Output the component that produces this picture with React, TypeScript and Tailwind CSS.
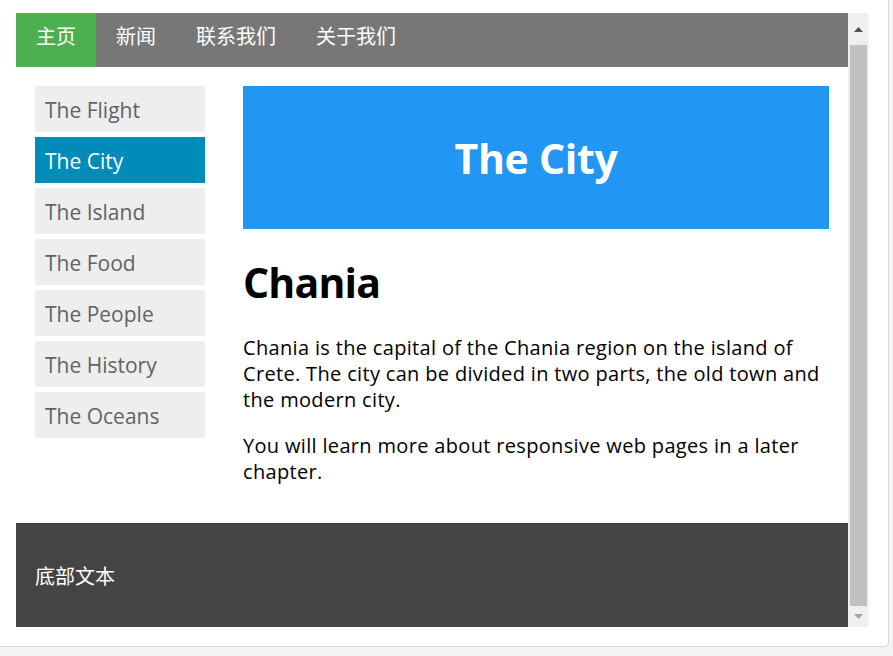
import React from "react";

const FONT = { fontFamily: '"Open Sans", "Noto Sans CJK SC", sans-serif' };

const navItems = ["主页", "新闻", "联系我们", "关于我们"];
const menu = ["The Flight", "The City", "The Island", "The Food", "The People", "The History", "The Oceans"];

function Scrollbar() {
  return (
    <div className="w-[21px] h-[614px] bg-[#f0f0f0] flex flex-col items-center shrink-0">
      <div className="h-[32px] w-full flex items-center justify-center">
        <svg width="9" height="5" viewBox="0 0 9 5">
          <polygon points="0,5 9,5 4.5,0" fill="#505050" />
        </svg>
      </div>
      <div className="w-[17px] h-[561px] bg-[#c1c1c1]" />
      <div className="flex-1 w-full flex items-center justify-center">
        <svg width="9" height="5" viewBox="0 0 9 5">
          <polygon points="0,0 9,0 4.5,5" fill="#a3a3a3" />
        </svg>
      </div>
    </div>
  );
}

export default function App() {
  return (
    <div className="w-[893px] h-[656px] bg-[#f3f3f3] overflow-hidden" style={FONT}>
      <div className="w-[889px] h-[647px] bg-white border-r border-b border-[#d9d9d9] rounded-br-[5px] pt-[13px] pl-[16px] flex">
        <div className="w-[832px] h-[614px] overflow-hidden flex flex-col shrink-0">
          {/* nav */}
          <div className="h-[54px] bg-[#777777] flex shrink-0">
            {navItems.map((t, i) => (
              <div
                key={t}
                className={`px-[20px] h-[54px] text-[20px] leading-[44px] pt-[2px] pb-[8px] text-white ${i === 0 ? "bg-[#4caf50]" : ""}`}
              >
                {t}
              </div>
            ))}
          </div>
          {/* body */}
          <div className="flex shrink-0">
            <div className="w-[208px] p-[19px] shrink-0">
              <ul className="flex flex-col gap-[5px]">
                {menu.map((m, i) => (
                  <li
                    key={m}
                    className={`h-[46px] px-[10px] pt-[2px] text-[21px] leading-[44px] ${
                      i === 1 ? "bg-[#008cba] text-white" : "bg-[#eeeeee] text-[#636363]"
                    }`}
                  >
                    {m}
                  </li>
                ))}
              </ul>
            </div>
            <div className="w-[624px] px-[19px] pt-[19px] pb-[19px] shrink-0">
              <div className="h-[143px] bg-[#2196f3] flex items-center justify-center">
                <h1 className="text-[41px] leading-[42px] tracking-[-0.3px] font-bold text-white">The City</h1>
              </div>
              <h1 className="mt-[28px] text-[41px] leading-[50px] tracking-[-0.8px] font-bold text-black">Chania</h1>
              <p className="mt-[28px] text-[20px] leading-[26px] tracking-[0.33px] text-black whitespace-nowrap">
                Chania is the capital of the Chania region on the island of
                <br />
                Crete. The city can be divided in two parts, the old town and
                <br />
                the modern city.
              </p>
              <p className="mt-[20px] mb-[19px] text-[20px] leading-[26px] tracking-[0.33px] text-black whitespace-nowrap">
                You will learn more about responsive web pages in a later
                <br />
                chapter.
              </p>
            </div>
          </div>
          {/* footer */}
          <div className="h-[104px] bg-[#444444] px-[19px] pt-[4px] flex items-center shrink-0">
            <p className="text-[20px] leading-[26px] text-white">底部文本</p>
          </div>
        </div>
        <Scrollbar />
      </div>
    </div>
  );
}
